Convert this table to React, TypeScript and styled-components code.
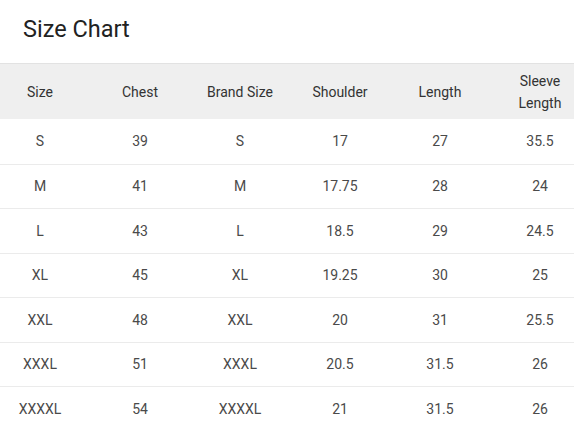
import React from "react";
import styled, { createGlobalStyle } from "styled-components";

const Global = createGlobalStyle`
  html, body { margin: 0; padding: 0; background: #fff; overflow: hidden; }
  body { font-family: Roboto, "Liberation Sans", Arial, sans-serif; }
`;

const Page = styled.div`
  width: 574px;
  height: 447px;
  overflow: hidden;
  background: #fff;
`;

const Title = styled.h2`
  margin: 0;
  height: 63px;
  box-sizing: border-box;
  padding: 15px 0 0 23px;
  font-size: 23.5px;
  font-weight: 400;
  color: #222;
  line-height: 28px;
`;

const Table = styled.div`
  display: grid;
  grid-template-columns: repeat(6, 100px);
  width: 600px;
  margin-left: -10px;
`;

const HeadRow = styled.div`
  display: contents;
`;

const HeadCell = styled.div`
  height: 56px;
  box-sizing: border-box;
  border-top: 1px solid #e2e2e2;
  background: #efefef;
  display: flex;
  align-items: center;
  justify-content: center;
  text-align: center;
  padding: 0 15px;
  font-size: 14px;
  line-height: 22px;
  color: #333;
`;

const Cell = styled.div<{ $first?: boolean }>`
  height: 44.5px;
  box-sizing: border-box;
  border-top: ${(p) => (p.$first ? "none" : "1px solid #ebebeb")};
  display: flex;
  align-items: center;
  justify-content: center;
  font-size: 14px;
  color: #4a4a4a;
`;

const headers = ["Size", "Chest", "Brand Size", "Shoulder", "Length", "Sleeve Length"];
const rows = [
  ["S", "39", "S", "17", "27", "35.5"],
  ["M", "41", "M", "17.75", "28", "24"],
  ["L", "43", "L", "18.5", "29", "24.5"],
  ["XL", "45", "XL", "19.25", "30", "25"],
  ["XXL", "48", "XXL", "20", "31", "25.5"],
  ["XXXL", "51", "XXXL", "20.5", "31.5", "26"],
  ["XXXXL", "54", "XXXXL", "21", "31.5", "26"],
];

export default function App() {
  return (
    <Page>
      <Global />
      <Title>Size Chart</Title>
      <Table>
        <HeadRow>
          {headers.map((h) => (
            <HeadCell key={h}>{h}</HeadCell>
          ))}
        </HeadRow>
        {rows.map((r, i) =>
          r.map((c, j) => (
            <Cell key={`${i}-${j}`} $first={i === 0}>
              {c}
            </Cell>
          ))
        )}
      </Table>
    </Page>
  );
}
